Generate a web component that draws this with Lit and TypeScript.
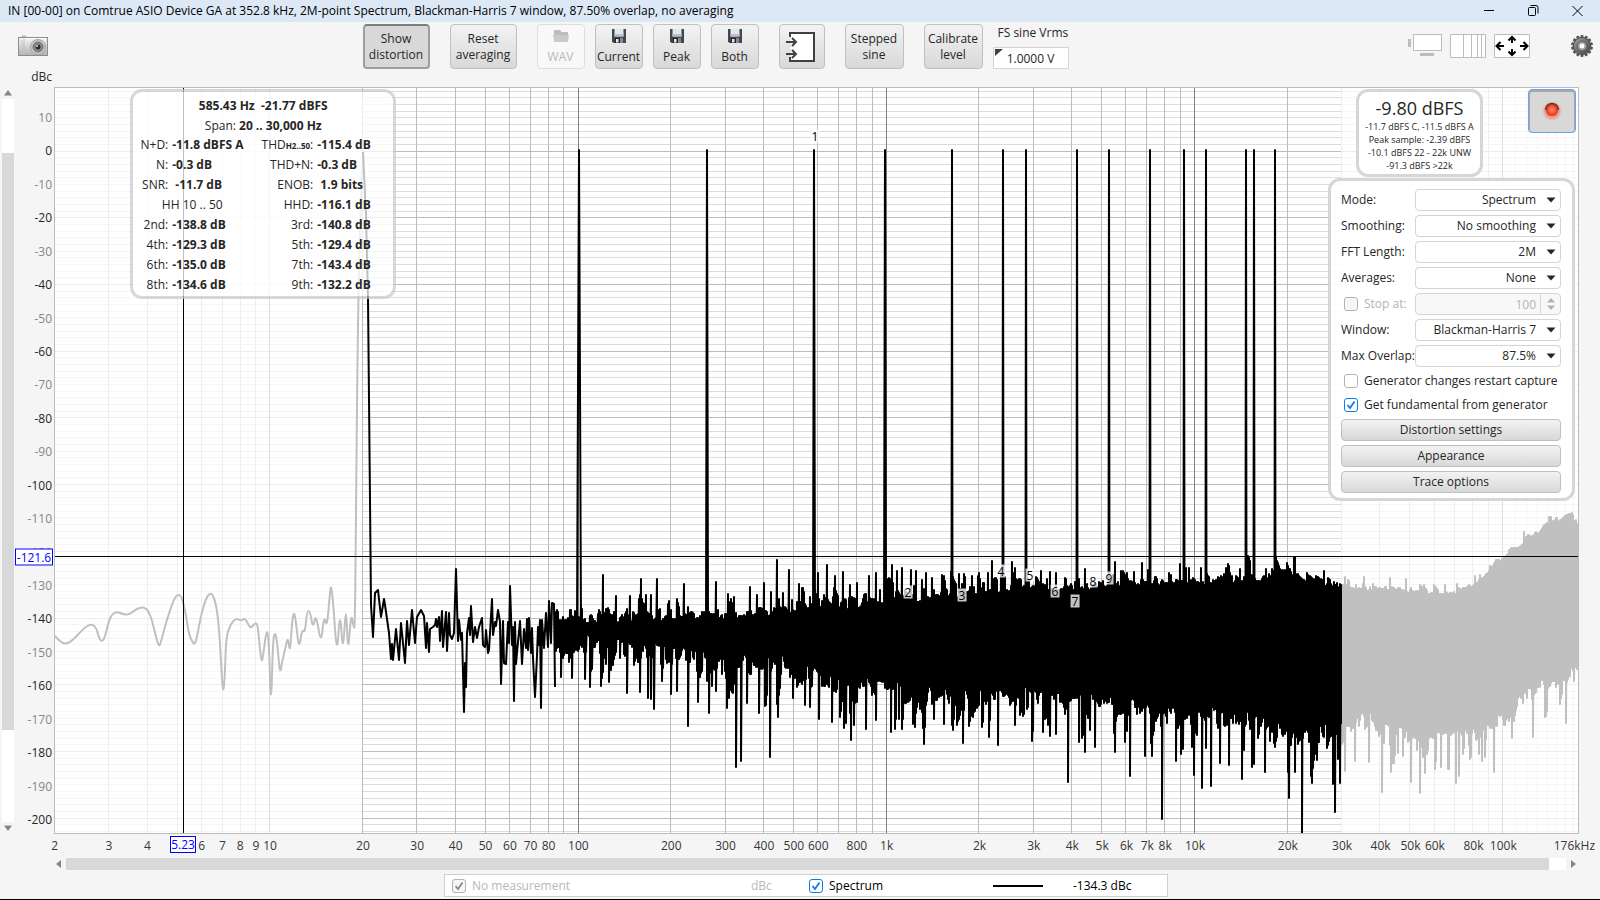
import { LitElement, html, svg, css } from 'lit';
import { customElement, property, state } from 'lit/decorators.js';
import { classMap } from 'lit/directives/class-map.js';

type Point = [number, number];

// drawing area of the graph, in svg units
const AREA = { x: 55, y: 88, w: 1523, h: 745 };
const DECADE = 308.1;
const DB_STEP = 3.3345;

const xOf = (freq: number) => 54.6 + DECADE * Math.log10(freq / 2);
const yOf = (db: number) => 151.2 - db * DB_STEP;
const leftPct = (x: number) => ((x - AREA.x) / AREA.w) * 100;
const topPct = (y: number) => ((y - AREA.y) / AREA.h) * 100;

const SPAN_START = xOf(20);
const SPAN_END = xOf(30000);
const CURSOR = { x: 183, y: 556 };

// below 20 Hz, outside the span
const lowTrace: Point[] = [
    [55, 636], [60, 642], [66, 644], [72, 641], [84, 628], [91, 624], [96, 627], [99, 638], [102, 642], [105, 637],
    [109, 620], [113, 613], [118, 612], [122, 614], [129, 615], [136, 609], [143, 607], [148, 610], [152, 620],
    [156, 637], [159, 647], [161, 642], [164, 630], [169, 613], [174, 599], [178, 594], [182, 597], [186, 615],
    [189, 635], [193, 643], [195, 644], [197, 637], [201, 615], [206, 598], [211, 592], [215, 600], [218, 617],
    [220, 643], [223, 698], [225, 673], [226, 638], [230, 625], [236, 618], [241, 621], [245, 618], [249, 626],
    [251, 628], [256, 622], [258, 627], [260, 650], [262, 664], [264, 648], [267, 628], [269, 643], [271, 712],
    [273, 640], [275, 632], [277, 640], [280, 675], [282, 662], [285, 650], [288, 636], [290, 654], [292, 622],
    [294, 611], [296, 622], [299, 650], [302, 629], [305, 633], [307, 611], [310, 611], [313, 629], [316, 613],
    [321, 645], [324, 615], [327, 628], [330, 592], [331, 585], [333, 600], [337, 658], [340, 608], [343, 656],
    [346, 600], [348, 656], [351, 614], [353, 623], [355, 632], [356, 500], [358, 310], [361, 190], [363, 152],
];

// 20 Hz up to where the bins start to overlap
const midTrace: Point[] = [
    [363, 152], [366, 215], [368, 298], [370, 500], [371, 605], [373, 637], [375, 593], [378, 590], [381, 617],
    [384, 599], [385, 605], [389, 633], [391, 659], [392, 644], [393, 660], [396, 629], [399, 660], [401, 623],
    [405, 663], [407, 621], [409, 645], [412, 610], [415, 643], [417, 617], [421, 610], [424, 616], [426, 648],
    [427, 623], [429, 652], [430, 629], [433, 627], [435, 625], [436, 619], [437, 627], [439, 617], [440, 641],
    [442, 611], [443, 647], [446, 612], [447, 651], [449, 613], [450, 635], [452, 639], [454, 633], [456, 569],
    [458, 641], [459, 620], [461, 640], [462, 633], [464, 712], [465, 663], [466, 687], [467, 633], [469, 618],
    [470, 635], [471, 606], [473, 642], [475, 627], [477, 638], [479, 627], [482, 618], [483, 645], [485, 647],
    [486, 630], [488, 653], [489, 650], [492, 599], [493, 635], [495, 622], [496, 626], [498, 610], [500, 622],
    [501, 684], [503, 621], [504, 663], [506, 664], [508, 622], [509, 643], [510, 586], [512, 645], [513, 627],
    [514, 701], [515, 622], [516, 664], [518, 642], [520, 621], [522, 664], [524, 629], [526, 648], [527, 619],
    [528, 650], [529, 618], [531, 653], [532, 628], [533, 658], [535, 697], [537, 656], [538, 627], [539, 645],
    [540, 620], [541, 708], [542, 620], [544, 648], [546, 613], [548, 647], [549, 601], [551, 643], [552, 603],
    [554, 604], [555, 687],
];

const bandTop: Point[] = [
    [555, 616], [600, 617], [650, 615], [700, 616], [750, 610], [800, 608], [850, 602], [900, 597], [950, 592],
    [1000, 586], [1050, 586], [1100, 582], [1150, 581], [1200, 578], [1250, 576], [1300, 577], [1341, 583],
];
const bandBottom: Point[] = [
    [555, 650], [600, 648], [650, 656], [700, 662], [750, 664], [800, 672], [850, 692], [900, 690], [950, 704],
    [1000, 700], [1050, 702], [1100, 706], [1150, 712], [1200, 716], [1250, 725], [1300, 738], [1341, 738],
];
const bandPeaks: Point[] = [
    [603, 575], [641, 579], [651, 595], [657, 579], [684, 584], [716, 582], [734, 597], [750, 587], [757, 595],
    [764, 583], [771, 592], [777, 560], [783, 593], [789, 570], [799, 584], [810, 597], [818, 573], [827, 565],
    [835, 576], [843, 572], [850, 585], [857, 583], [869, 576], [876, 573], [887, 579], [892, 565], [897, 571],
    [902, 568], [911, 570], [916, 571], [922, 580], [926, 573], [932, 578], [942, 575], [959, 574], [972, 576],
    [979, 573], [988, 573], [992, 561], [1012, 562], [1015, 568], [1041, 571], [1050, 572], [1056, 573],
    [1085, 569], [1127, 573], [1142, 563], [1148, 570], [1180, 564], [1186, 568], [1201, 568], [1240, 569],
    [1284, 571], [1324, 571],
];
const bandDips: Point[] = [
    [561, 677], [572, 678], [585, 679], [609, 682], [627, 693], [640, 692], [648, 698], [651, 699], [654, 709],
    [662, 681], [671, 694], [677, 691], [688, 726], [698, 702], [709, 713], [716, 691], [727, 708], [736, 767],
    [741, 761], [747, 703], [759, 713], [770, 757], [778, 717], [793, 698], [810, 707], [819, 719], [832, 722],
    [846, 723], [851, 740], [854, 725], [876, 720], [891, 732], [915, 727], [924, 744], [934, 719], [953, 730],
    [969, 726], [989, 737], [998, 745], [1015, 725], [1033, 731], [1043, 732], [1056, 734], [1068, 782],
    [1079, 742], [1085, 752], [1095, 747], [1115, 752], [1130, 776], [1145, 756], [1152, 756], [1162, 819],
    [1176, 761], [1194, 775], [1202, 788], [1211, 786], [1220, 763], [1229, 765], [1242, 779], [1252, 767],
    [1265, 772], [1289, 798], [1295, 772], [1302, 833], [1312, 783], [1333, 784], [1335, 812], [1340, 783],
];

const highTop: Point[] = [
    [1342, 585], [1362, 589], [1400, 589], [1420, 592], [1455, 592], [1465, 588], [1475, 583], [1490, 570],
    [1500, 561], [1511, 552], [1520, 545], [1530, 536], [1540, 530], [1550, 521], [1560, 519], [1566, 514],
    [1571, 515], [1575, 521], [1578, 526],
];
const highBottom: Point[] = [
    [1342, 736], [1365, 718], [1380, 730], [1400, 735], [1420, 742], [1440, 740], [1470, 736], [1490, 732],
    [1500, 722], [1510, 710], [1520, 700], [1540, 688], [1560, 682], [1578, 672],
];
const highPeaks: Point[] = [[1345, 577], [1364, 577], [1390, 578], [1406, 579], [1434, 585], [1524, 532]];
const highDips: Point[] = [
    [1345, 771], [1355, 761], [1369, 762], [1382, 792], [1391, 772], [1411, 782], [1420, 793], [1425, 773],
    [1441, 767], [1456, 783], [1459, 776], [1470, 759], [1482, 761], [1494, 772], [1512, 738], [1533, 737],
    [1566, 723],
];

// test tones: centre and width at the foot
const tones: Point[] = [
    [579, 4], [707, 2], [814, 2], [885, 2], [952, 1], [1003, 1], [1026, 1], [1077, 1], [1109, 1], [1150, 1],
    [1184, 1], [1206, 1], [1246, 1], [1254, 1], [1275, 1],
];

const tags = [
    { n: 1, x: 815, y: 136 },
    { n: 2, x: 908, y: 592 },
    { n: 3, x: 962, y: 595 },
    { n: 4, x: 1001, y: 571 },
    { n: 5, x: 1030, y: 575 },
    { n: 6, x: 1055, y: 591 },
    { n: 7, x: 1075, y: 601 },
    { n: 8, x: 1093, y: 581 },
    { n: 9, x: 1109, y: 578 },
];

const freqLabels: [number, string][] = [
    [2, '2'], [3, '3'], [4, '4'], [6, '6'], [7, '7'], [8, '8'], [9, '9'], [10, '10'], [20, '20'], [30, '30'],
    [40, '40'], [50, '50'], [60, '60'], [70, '70'], [80, '80'], [100, '100'], [200, '200'], [300, '300'],
    [400, '400'], [500, '500'], [600, '600'], [800, '800'], [1000, '1k'], [2000, '2k'], [3000, '3k'],
    [4000, '4k'], [5000, '5k'], [6000, '6k'], [7000, '7k'], [8000, '8k'], [10000, '10k'], [20000, '20k'],
    [30000, '30k'], [40000, '40k'], [50000, '50k'], [60000, '60k'], [80000, '80k'], [100000, '100k'],
    [170000, '176kHz'],
];

const lerp = (points: Point[], x: number) => {
    const i = Math.max(1, points.findIndex(p => p[0] >= x));
    const [x0, y0] = points[i - 1];
    const [x1, y1] = points[i];
    return y0 + ((y1 - y0) * (x - x0)) / (x1 - x0);
};

const random = (seed: number) => () => {
    seed = (seed * 1664525 + 1013904223) % 4294967296;
    return seed / 4294967296;
};

const linePath = (points: Point[]) => 'M' + points.map(p => p.join(' ')).join('L');

function smoothPath(points: Point[]) {
    let d = `M${points[0].join(' ')}`;
    for (let i = 1; i < points.length - 1; i++) {
        const [x, y] = points[i];
        const [nx, ny] = points[i + 1];
        d += `Q${x} ${y} ${(x + nx) / 2} ${(y + ny) / 2}`;
    }
    return d + `L${points[points.length - 1].join(' ')}`;
}

// noise that drifts in clumps instead of jumping on every column
function clumped(rnd: () => number, size: number) {
    let value = 0;
    return () => {
        const next = (-Math.log(rnd() + 0.01) - 0.9) * size;
        value = rnd() < 0.45 ? next : value * 0.8 + next * 0.2;
        return Math.min(value, size * 2.5);
    };
}

function noisePath(top: Point[], bottom: Point[], peaks: Point[], dips: Point[], rise: number, fall: number, seed: number) {
    const rnd = random(seed);
    const up = clumped(rnd, rise);
    const down = clumped(rnd, fall);
    const points: Point[] = [];
    const end = top[top.length - 1][0];
    for (let x = top[0][0]; x <= end; x++) {
        const peak = peaks.find(p => p[0] === x);
        const dip = dips.find(p => p[0] === x);
        points.push([x, peak ? peak[1] : Math.round(lerp(top, x) - up())]);
        points.push([x, dip ? dip[1] : Math.round(lerp(bottom, x) + down())]);
    }
    return linePath(points);
}

const lowPath = smoothPath(lowTrace);
const midPath = linePath(midTrace);
const bandPath = noisePath(bandTop, bandBottom, bandPeaks, bandDips, 8, 16, 7);
const highPath = noisePath(highTop, highBottom, highPeaks, highDips, 3, 12, 21);
const tonePath = tones.map(([x, w]) => `M${x - w / 2} 625L${x} 150L${x + w / 2} 625`).join('');

@customElement('spectrum-plot')
export class SpectrumPlot extends LitElement {
    static styles = css`
        :host {
            display: block;
            position: relative;
            background: #fff;
            border: 1px solid #bcbcbc;
            font-size: 12px;
        }
        svg {
            position: absolute;
            inset: 0;
            width: 100%;
            height: 100%;
        }
        .grid {
            shape-rendering: crispEdges;
        }
        .trace {
            fill: none;
            stroke: #000;
            stroke-width: 2;
            stroke-linejoin: round;
        }
        .outside {
            stroke: #c0c0c0;
        }
        .cursor {
            stroke: #000;
            shape-rendering: crispEdges;
        }
        .tag {
            position: absolute;
            transform: translate(-50%, -50%);
            padding: 0 1px;
            line-height: 13px;
            color: #000;
            background: rgba(255, 255, 255, 0.77);
        }
    `;

    _gridLines() {
        const { x, y, w, h } = AREA;
        const rows = [];
        for (let db = 18; db >= -204; db -= 2) {
            const ly = Math.floor(yOf(db)) + 0.5;
            const major = db % 20 === 0;
            rows.push(svg`
                <path d="M${x} ${ly}H${x + w}" stroke=${major ? '#ececec' : '#f5f5f5'} />
                <path d="M${SPAN_START} ${ly}H${SPAN_END}" stroke=${major ? '#bcbcbc' : '#dcdcdc'} />`);
        }
        const cols = [];
        for (let decade = 1; decade <= 100000; decade *= 10) {
            for (let i = 1; i < 10; i++) {
                const freq = decade * i;
                if (freq <= 2 || freq > 176000) continue;
                const lx = Math.floor(xOf(freq)) + 0.5;
                const inside = freq >= 20 && freq < 30000;
                const stroke = inside ? (i === 1 ? '#808080' : '#bcbcbc') : i === 1 ? '#dedede' : '#eeeeee';
                cols.push(svg`<path d="M${lx} ${y}V${y + h}" stroke=${stroke} />`);
            }
        }
        for (let freq = 110000; freq < 176000; freq += 10000) {
            cols.push(svg`<path d="M${Math.floor(xOf(freq)) + 0.5} ${y}V${y + h}" stroke="#f5f5f5" />`);
        }
        return [rows, cols];
    }

    render() {
        const { x, y, w, h } = AREA;
        return html`
            <svg viewBox="${x} ${y} ${w} ${h}" preserveAspectRatio="none" aria-hidden="true">
                <g class="grid">${this._gridLines()}</g>
                <path class="trace outside" d=${lowPath} />
                <path class="trace outside" d=${highPath} />
                <path class="trace" d=${midPath} />
                <path class="trace" d=${bandPath} />
                <path class="trace" d=${tonePath} />
                <path class="cursor" d="M${x} ${CURSOR.y + 0.5}H${x + w}M${CURSOR.x + 0.5} ${y}V${y + h}" />
            </svg>
            ${tags.map(t => html`<span class="tag" style="left:${leftPct(t.x)}%;top:${topPct(t.y)}%">${t.n}</span>`)}
        `;
    }
}

const buttonStyles = css`
    button {
        font: inherit;
        color: #262626;
        padding: 0;
        border: 1px solid #c0c0c0;
        border-radius: 4px;
        background: linear-gradient(#f3f3f3, #d8d8d8);
    }
`;

const checkStyles = css`
    input[type='checkbox'] {
        appearance: none;
        width: 14px;
        height: 14px;
        margin: 0;
        flex: none;
        border: 1px solid #b4b4b4;
        border-radius: 3px;
        background: #fff;
    }
    input[type='checkbox']:checked {
        border-color: #0a7cf0;
        background: #fff url("data:image/svg+xml,%3Csvg xmlns='http://www.w3.org/2000/svg' viewBox='0 0 12 12'%3E%3Cpath d='M2.5 6l2.5 3L9.5 2.5' fill='none' stroke='%230a7cf0' stroke-width='1.8'/%3E%3C/svg%3E");
    }
    input[type='checkbox']:disabled {
        border-color: #b4b4b4;
        background-color: #f6f6f6;
    }
    input[type='checkbox']:checked:disabled {
        background: #f6f6f6 url("data:image/svg+xml,%3Csvg xmlns='http://www.w3.org/2000/svg' viewBox='0 0 12 12'%3E%3Cpath d='M2.5 6l2.5 3L9.5 2.5' fill='none' stroke='%23888888' stroke-width='1.8'/%3E%3C/svg%3E");
    }
`;

@customElement('analyser-settings')
export class AnalyserSettings extends LitElement {
    static styles = [
        buttonStyles,
        checkStyles,
        css`
            :host {
                box-sizing: border-box;
                display: flex;
                flex-direction: column;
                gap: 4px;
                width: 247px;
                padding: 8px 11px 5px 10px;
                border: 3px solid #d6d6d6;
                border-radius: 12px;
                background: rgba(255, 255, 255, 0.88);
                background-clip: padding-box;
                color: #262626;
            }
            .row {
                display: grid;
                grid-template-columns: 74px 1fr;
                align-items: center;
                height: 22px;
                white-space: nowrap;
            }
            .box {
                position: relative;
                height: 22px;
            }
            select,
            .number {
                box-sizing: border-box;
                appearance: none;
                width: 100%;
                height: 22px;
                padding: 0 24px 0 4px;
                border: 1px solid #d4d4d4;
                border-radius: 4px;
                background: #fff;
                font: inherit;
                color: inherit;
                text-align: right;
                text-align-last: right;
            }
            .number {
                background: #f8f8f8;
                color: #b4b4b4;
            }
            .arrow {
                position: absolute;
                right: 5px;
                top: 0;
                width: 10px;
                height: 22px;
                pointer-events: none;
            }
            .split {
                position: absolute;
                right: 20px;
                top: 1px;
                bottom: 1px;
                border-left: 1px solid #d8d8d8;
            }
            .check {
                display: flex;
                align-items: center;
                gap: 6px;
                padding-left: 3px;
                height: 20px;
            }
            .muted {
                color: #b4b4b4;
            }
            button {
                height: 22px;
            }
        `,
    ];

    static properties = {
        options: { type: Array },
    };

    options: { id: string; label: string; value: string }[] = [
        { id: 'mode', label: 'Mode:', value: 'Spectrum' },
        { id: 'smoothing', label: 'Smoothing:', value: 'No smoothing' },
        { id: 'fft', label: 'FFT Length:', value: '2M' },
        { id: 'averages', label: 'Averages:', value: 'None' },
        { id: 'window', label: 'Window:', value: 'Blackman-Harris 7' },
        { id: 'overlap', label: 'Max Overlap:', value: '87.5%' },
    ];

    _select(o: { id: string; label: string; value: string }) {
        return html`
            <div class="row">
                <label for=${o.id}>${o.label}</label>
                <div class="box">
                    <select id=${o.id}><option>${o.value}</option></select>
                    <svg class="arrow" viewBox="0 0 10 22"><path d="M0.5 8.5h9L5 13.5z" fill="#262626" /></svg>
                </div>
            </div>
        `;
    }

    render() {
        return html`
            ${this.options.slice(0, 4).map(o => this._select(o))}
            <div class="row">
                <label class="check muted"><input type="checkbox" disabled />Stop at:</label>
                <div class="box">
                    <input class="number" type="text" aria-label="Stop at" value="100" disabled />
                    <span class="split"></span>
                    <svg class="arrow" viewBox="0 0 10 22">
                        <path d="M1 9.5h8L5 5zM1 12.5h8L5 17z" fill="#b4b4b4" />
                    </svg>
                </div>
            </div>
            ${this.options.slice(4).map(o => this._select(o))}
            <label class="check"><input type="checkbox" />Generator changes restart capture</label>
            <label class="check"><input type="checkbox" checked />Get fundamental from generator</label>
            <button>Distortion settings</button>
            <button>Appearance</button>
            <button>Trace options</button>
        `;
    }
}

@customElement('distortion-panel')
export class DistortionPanel extends LitElement {
    static styles = css`
        :host {
            box-sizing: border-box;
            display: block;
            width: 266px;
            padding-top: 4px;
            border: 3px solid rgba(200, 200, 200, 0.7);
            border-radius: 12px;
            background: rgba(255, 255, 255, 0.75);
            background-clip: padding-box;
            color: #262626;
            line-height: 20px;
        }
        .line {
            text-align: center;
            white-space: pre;
        }
        table {
            width: 100%;
            border-collapse: collapse;
            table-layout: fixed;
            line-height: 18px;
        }
        th,
        td {
            padding: 0 0 2px;
            height: 18px;
            text-align: right;
            font-weight: normal;
            white-space: nowrap;
        }
        td {
            padding-left: 4px;
            text-align: left;
            font-weight: bold;
        }
        .name {
            width: 35px;
        }
        .value {
            width: 83px;
        }
        .wide {
            width: 62px;
        }
        .span {
            text-align: center;
            padding-left: 0;
            font-weight: normal;
        }
        small {
            font-size: 8px;
            line-height: 8px;
            font-weight: bold;
        }
    `;

    @property({ type: Array }) harmonics = [
        ['2nd:', '-138.8 dB', '3rd:', '-140.8 dB'],
        ['4th:', '-129.3 dB', '5th:', '-129.4 dB'],
        ['6th:', '-135.0 dB', '7th:', '-143.4 dB'],
        ['8th:', '-134.6 dB', '9th:', '-132.2 dB'],
    ];

    render() {
        return html`
            <div class="line"><b>585.43 Hz  -21.77 dBFS</b></div>
            <div class="line">Span: <b>20 .. 30,000 Hz</b></div>
            <table>
                <colgroup><col class="name" /><col class="value" /><col class="wide" /><col /></colgroup>
                <tr><th>N+D:</th><td>-11.8 dBFS A</td><th>THD<small>H2..50</small>:</th><td>-115.4 dB</td></tr>
                <tr><th>N:</th><td>-0.3 dB</td><th>THD+N:</th><td>-0.3 dB</td></tr>
                <tr><th>SNR:</th><td>&nbsp;-11.7 dB</td><th>ENOB:</th><td>&nbsp;1.9 bits</td></tr>
                <tr><td class="span" colspan="2">HH 10 .. 50</td><th>HHD:</th><td>-116.1 dB</td></tr>
                ${this.harmonics.map(h => html`<tr><th>${h[0]}</th><td>${h[1]}</td><th>${h[2]}</th><td>${h[3]}</td></tr>`)}
            </table>
        `;
    }
}

@customElement('app-root')
export class AppRoot extends LitElement {
    static styles = [
        buttonStyles,
        checkStyles,
        css`
            :host {
                box-sizing: border-box;
                display: flex;
                flex-direction: column;
                height: 100vh;
                overflow: hidden;
                background: #f5f5f5;
                border-bottom: 1px solid #000;
                color: #262626;
                font-family: 'Open Sans', 'Noto Sans', sans-serif;
                font-size: 12px;
                line-height: 16px;
            }
            .titlebar {
                display: flex;
                align-items: center;
                justify-content: space-between;
                height: 22px;
                padding: 0 12px 0 8px;
                background: #dce8f6;
                color: #000;
            }
            .window-buttons {
                display: flex;
                gap: 22px;
            }
            .icon {
                display: block;
                border: none;
                border-radius: 0;
                background: none;
            }
            svg {
                display: block;
            }
            .toolbar {
                display: flex;
                justify-content: space-between;
                align-items: flex-start;
                padding: 2px 7px 0 17px;
                height: 45px;
            }
            .camera {
                padding-top: 11px;
            }
            .actions {
                display: flex;
                gap: 20px;
                padding-right: 24px;
            }
            .actions button {
                height: 45px;
            }
            .saves {
                display: flex;
                gap: 10px;
            }
            .saves button {
                display: flex;
                flex-direction: column;
                align-items: center;
                gap: 5px;
                padding-top: 3px;
                width: 48px;
            }
            .wide {
                width: 67px;
            }
            .mid {
                width: 59px;
            }
            .import {
                display: flex;
                align-items: center;
                padding: 0 6px;
                width: 46px;
            }
            button.pressed {
                border: 2px solid #9c9ea0;
                border-top-color: #7c7e80;
                background: #d8d8d8;
            }
            .saves button:disabled {
                color: #b8b8b8;
                border-color: #dedede;
                background: #f8f8f8;
            }
            .vrms {
                display: flex;
                flex-direction: column;
                gap: 6px;
                padding-top: 1px;
                margin-left: -10px;
            }
            .vrms label {
                padding-left: 5px;
            }
            .field {
                position: relative;
            }
            .field input {
                box-sizing: border-box;
                display: block;
                width: 76px;
                height: 22px;
                padding: 0;
                border: 1px solid #d4d4d4;
                background: #fff;
                font: inherit;
                color: inherit;
                text-align: center;
            }
            .corner {
                position: absolute;
                left: 2px;
                top: 2px;
                border-top: 7px solid #404040;
                border-right: 8px solid transparent;
            }
            .views {
                display: flex;
                gap: 8px;
                padding-top: 10px;
            }
            .gear {
                margin-left: 33px;
            }
            .unit {
                width: 52px;
                padding-bottom: 2px;
                text-align: right;
            }
            .main {
                flex: 1;
                min-height: 0;
                display: grid;
                grid-template-columns: 14px 40px 1fr 21px;
                grid-template-rows: 1fr 24px 12px;
            }
            .vscroll {
                display: flex;
                flex-direction: column;
                align-items: center;
                gap: 3px;
                padding: 3px 0 3px 2px;
            }
            .track {
                flex: 1;
                align-self: stretch;
                background: #fff;
                display: flex;
            }
            .vscroll .track {
                flex-direction: column;
            }
            .before {
                flex: 54;
            }
            .thumb {
                flex: 577;
                background: #d8d8d8;
            }
            .after {
                flex: 92;
            }
            .hscroll {
                grid-column: 3;
                display: flex;
                align-items: center;
                gap: 5px;
                padding: 0 3px 0 2px;
            }
            .hscroll .track {
                height: 12px;
            }
            .hscroll .thumb {
                flex: 1483;
            }
            .hscroll .after {
                flex: 17;
            }
            .levels {
                position: relative;
                padding-top: 1px;
            }
            .level {
                position: absolute;
                right: 2px;
                margin-top: 1px;
                transform: translateY(-50%);
                color: #262626;
            }
            .level.minor {
                color: #868686;
            }
            .freqs {
                grid-column: 3;
                position: relative;
                margin-left: 1px;
                white-space: nowrap;
            }
            .freq {
                position: absolute;
                top: 4px;
                transform: translateX(-50%);
                color: #363636;
            }
            .readout {
                position: absolute;
                box-sizing: border-box;
                height: 17px;
                line-height: 15px;
                border: 1px solid #0000ff;
                background: #fff;
                color: #0000ff;
                text-align: center;
            }
            .levels .readout {
                width: 38px;
                right: 1px;
                margin-top: 1px;
                transform: translateY(-50%);
            }
            .freqs .readout {
                top: 2px;
                width: 26px;
                transform: translateX(-50%);
            }
            .graph {
                position: relative;
                min-width: 0;
            }
            spectrum-plot {
                height: calc(100% - 2px);
            }
            distortion-panel {
                position: absolute;
                left: 5%;
                top: 2px;
            }
            .side {
                position: absolute;
                top: 2px;
                right: 4px;
                display: flex;
                flex-direction: column;
                align-items: flex-end;
                gap: 1px;
            }
            .side-top {
                display: flex;
                align-items: flex-start;
                gap: 45px;
            }
            .meter {
                box-sizing: border-box;
                width: 127px;
                height: 88px;
                padding-top: 4px;
                border: 3px solid #d6d6d6;
                border-radius: 12px;
                background: rgba(255, 255, 255, 0.88);
                background-clip: padding-box;
                text-align: center;
                font-size: 9px;
                line-height: 13px;
                white-space: nowrap;
            }
            .meter strong {
                display: block;
                font-size: 18px;
                font-weight: normal;
                line-height: 24px;
            }
            .record {
                display: flex;
                align-items: center;
                justify-content: center;
                width: 48px;
                height: 44px;
                margin-right: -1px;
                border: 1px solid #6aa5ee;
                background: #d8d8d8;
                box-shadow: inset 0 1px 0 1px #a8a8a8;
            }
            .legend {
                box-sizing: border-box;
                display: grid;
                grid-template-columns: 299px 58px 184px 80px 1fr;
                align-items: center;
                align-self: center;
                width: 724px;
                height: 23px;
                margin: 4px 0 2px 12px;
                padding-left: 7px;
                border: 1px solid #cfcfcf;
                background: #fff;
                color: #000;
            }
            .legend label {
                display: flex;
                align-items: center;
                gap: 6px;
            }
            .muted {
                color: #b8b8b8;
            }
            .sample {
                width: 50px;
                height: 2px;
                background: #000;
            }
        `,
    ];

    @state() private distortion = true;

    _floppy() {
        return html`
            <svg width="16" height="16" viewBox="0 0 16 16">
                <path d="M1 1h14v14H2.5L1 13.500z" fill="#45454c" />
                <path d="M3.500 1h9v7.500h-9z" fill="#dfe8ee" />
                <path d="M3.500 6h9v2.500h-9z" fill="#b4c2cc" />
                <path d="M4 10h8v5H4z" fill="#26262a" />
                <path d="M5 11h2.500v3.500H5z" fill="#e8e8e8" />
                <path d="M9 10h3v5H9z" fill="#8a8a8e" />
            </svg>
        `;
    }

    _gear() {
        const teeth = Array.from({ length: 14 }, (_, i) => (i * 360) / 14);
        return html`
            <svg width="22" height="22" viewBox="0 0 22 22">
                <defs>
                    <linearGradient id="metal" x1="0" y1="0" x2="1" y2="1">
                        <stop offset="0" stop-color="#a8a8a8" />
                        <stop offset="0.5" stop-color="#707070" />
                        <stop offset="1" stop-color="#484848" />
                    </linearGradient>
                </defs>
                ${teeth.map(a => svg`<rect x="9.500" y="0" width="3" height="4" rx="1" fill="#585858" transform="rotate(${a} 11 11)" />`)}
                <circle cx="11" cy="11" r="8.500" fill="url(#metal)" stroke="#505050" />
                <circle cx="11" cy="11" r="5" fill="#9a9a9a" stroke="#585858" />
                <circle cx="11" cy="11" r="2.500" fill="#fff" />
            </svg>
        `;
    }

    _toolbar() {
        return html`
            <div class="toolbar">
                <button class="icon camera" aria-label="Capture image">
                    <svg width="31" height="23" viewBox="0 0 31 23">
                        <defs>
                            <linearGradient id="body" x1="0" y1="0" x2="0" y2="1">
                                <stop offset="0" stop-color="#f6f6f6" />
                                <stop offset="1" stop-color="#b0b0b0" />
                            </linearGradient>
                        </defs>
                        <path d="M5 3V1h4v2" fill="#d8d8d8" stroke="#b0b0b0" />
                        <rect x="1.500" y="2.500" width="29" height="18" fill="url(#body)" stroke="#8c8c8c" />
                        <path d="M4 5q4 6 0 14M7 4v16" fill="none" stroke="#c4c4c4" />
                        <path d="M9 3.500h20" stroke="#fff" />
                        <circle cx="21" cy="12" r="7.500" fill="#c8c8c8" stroke="#a4a4a4" />
                        <circle cx="21" cy="12" r="5" fill="#8a8a8a" stroke="#6c6c6c" />
                        <circle cx="21" cy="12" r="2.500" fill="#2c2c34" />
                        <circle cx="20" cy="11" r="1" fill="#dcdcec" />
                    </svg>
                </button>
                <div class="actions">
                    <button
                        class=${classMap({ wide: true, pressed: this.distortion })}
                        @click=${() => (this.distortion = !this.distortion)}
                    >Show<br />distortion</button>
                    <button class="wide">Reset<br />averaging</button>
                    <div class="saves">
                        <button disabled>
                            <svg width="16" height="16" viewBox="0 0 16 16">
                                <path d="M1 3q0-1 1-1h5l1.500 2H14q1 0 1 1v3H1z" fill="#bcbcbc" />
                                <path d="M0 7h16l-1 6q0 1-1 1H2q-1 0-1-1z" fill="#cacaca" />
                            </svg>
                            WAV
                        </button>
                        ${['Current', 'Peak', 'Both'].map(name => html`<button>${this._floppy()}${name}</button>`)}
                    </div>
                    <button class="import" aria-label="Import sweep">
                        <svg width="30" height="32" viewBox="0 0 30 32">
                            <path d="M5 5V2h23v28H5v-4" fill="#fff" stroke="none" />
                            <path d="M4 6V2h24v28H4v-4M0 11h10M6 7l4 4-4 4M0 23h10M6 19l4 4-4 4" fill="none" stroke="#404040" stroke-width="2" />
                        </svg>
                    </button>
                    <button class="mid">Stepped<br />sine</button>
                    <button class="mid">Calibrate<br />level</button>
                    <div class="vrms">
                        <label for="vrms">FS sine Vrms</label>
                        <div class="field">
                            <input id="vrms" type="text" value="1.0000 V" />
                            <span class="corner"></span>
                        </div>
                    </div>
                </div>
                <div class="views">
                    <button class="icon" aria-label="Scrollbars">
                        <svg width="35" height="24" viewBox="0 0 35 24">
                            <rect x="6.500" y="0.500" width="28" height="16" fill="#fff" stroke="#bcbcbc" />
                            <path d="M1 5h3v8H1zM13 19h14v3H13z" fill="#bcbcbc" />
                        </svg>
                    </button>
                    <button class="icon" aria-label="Frequency axis">
                        <svg width="36" height="24" viewBox="0 0 36 24">
                            <path d="M.5 .5h35v23H.5zM13.500 0v24M21.500 0v24M27.500 0v24M31.500 0v24" fill="#fff" stroke="#bcbcbc" />
                        </svg>
                    </button>
                    <button class="icon" aria-label="Graph limits">
                        <svg width="36" height="24" viewBox="0 0 36 24">
                            <path d="M.5 .5h35v23H.5z" fill="#fff" stroke="#bcbcbc" />
                            <path
                                d="M3 12h7M6.500 8L2.500 12l4 4M33 12h-7M29.500 8l4 4-4 4M18 3v6M14.500 6.500L18 3l3.500 3.500M18 21v-6M14.500 17.500L18 21l3.500-3.500"
                                fill="none" stroke="#000" stroke-width="2"
                            />
                        </svg>
                    </button>
                    <button class="icon gear" aria-label="Preferences">${this._gear()}</button>
                </div>
            </div>
        `;
    }

    _levelLabels() {
        const labels = [];
        for (let db = 10; db >= -200; db -= 10) {
            labels.push(html`
                <span class="level ${db % 20 ? 'minor' : ''}" style="top:${topPct(yOf(db))}%">${db}</span>
            `);
        }
        return labels;
    }

    render() {
        return html`
            <div class="titlebar">
                <span>IN [00-00] on Comtrue ASIO Device GA at 352.8 kHz, 2M-point Spectrum, Blackman-Harris 7 window, 87.50% overlap, no averaging</span>
                <div class="window-buttons">
                    ${[
                        ['Minimise', 'M6 10.500h10'],
                        ['Restore', 'M6.500 8.500q0-1 1-1h5q1 0 1 1v6q0 1-1 1h-5q-1 0-1-1zM8.500 5.500h5.500q2 0 2 2v6'],
                        ['Close', 'M6.500 6l10 10M16.500 6l-10 10'],
                    ].map(([name, d]) => html`
                        <button class="icon" aria-label=${name}>
                            <svg width="22" height="22" viewBox="0 0 22 22"><path d=${d} fill="none" stroke="#000" /></svg>
                        </button>
                    `)}
                </div>
            </div>
            ${this._toolbar()}
            <div class="unit">dBc</div>
            <div class="main">
                <div class="vscroll">
                    <svg width="8" height="6" viewBox="0 0 8 6"><path d="M0 5.500h8L4 0z" fill="#868686" /></svg>
                    <div class="track"><span class="before"></span><span class="thumb"></span><span class="after"></span></div>
                    <svg width="8" height="6" viewBox="0 0 8 6"><path d="M0 .5h8L4 6z" fill="#868686" /></svg>
                </div>
                <div class="levels">
                    ${this._levelLabels()}
                    <span class="readout" style="top:${topPct(CURSOR.y)}%">-121.6</span>
                </div>
                <div class="graph">
                    <spectrum-plot></spectrum-plot>
                    ${this.distortion ? html`<distortion-panel></distortion-panel>` : ''}
                    <div class="side">
                        <div class="side-top">
                            <div class="meter">
                                <strong>-9.80 dBFS</strong>
                                -11.7 dBFS C, -11.5 dBFS A<br />Peak sample: -2.39 dBFS<br />-10.1 dBFS 22 - 22k UNW<br />-91.3 dBFS &gt;22k
                            </div>
                            <button class="record" aria-label="Record">
                                <svg width="22" height="22" viewBox="0 0 22 22">
                                    <defs>
                                        <radialGradient id="lamp">
                                            <stop offset="0" stop-color="#ff9478" />
                                            <stop offset="0.7" stop-color="#fa4a28" />
                                            <stop offset="1" stop-color="#c83418" />
                                        </radialGradient>
                                        <radialGradient id="glow">
                                            <stop offset="0.6" stop-color="#ff6040" stop-opacity="0.6" />
                                            <stop offset="1" stop-color="#ff6040" stop-opacity="0" />
                                        </radialGradient>
                                    </defs>
                                    <circle cx="11" cy="11" r="10" fill="url(#glow)" />
                                    <circle cx="11" cy="10" r="6" fill="url(#lamp)" />
                                    <path d="M4.500 10a6.500 6.500 0 0 1 13 0" fill="none" stroke="#6e3428" stroke-width="1.500" />
                                </svg>
                            </button>
                        </div>
                        <analyser-settings></analyser-settings>
                    </div>
                </div>
                <span></span>
                <div class="freqs">
                    ${freqLabels.map(([f, text]) => html`<span class="freq" style="left:${leftPct(xOf(f))}%">${text}</span>`)}
                    <span class="readout" style="left:${leftPct(CURSOR.x)}%">5.23</span>
                </div>
                <div class="hscroll">
                    <svg width="5" height="8" viewBox="0 0 5 8"><path d="M5 0v8L0 4z" fill="#868686" /></svg>
                    <div class="track"><span class="thumb"></span><span class="after"></span></div>
                    <svg width="5" height="8" viewBox="0 0 5 8"><path d="M0 0v8l5-4z" fill="#868686" /></svg>
                </div>
            </div>
            <div class="legend">
                <label class="muted"><input type="checkbox" checked disabled />No measurement</label>
                <span class="muted">dBc</span>
                <label><input type="checkbox" checked />Spectrum</label>
                <span class="sample"></span>
                <span>-134.3 dBc</span>
            </div>
        `;
    }
}
